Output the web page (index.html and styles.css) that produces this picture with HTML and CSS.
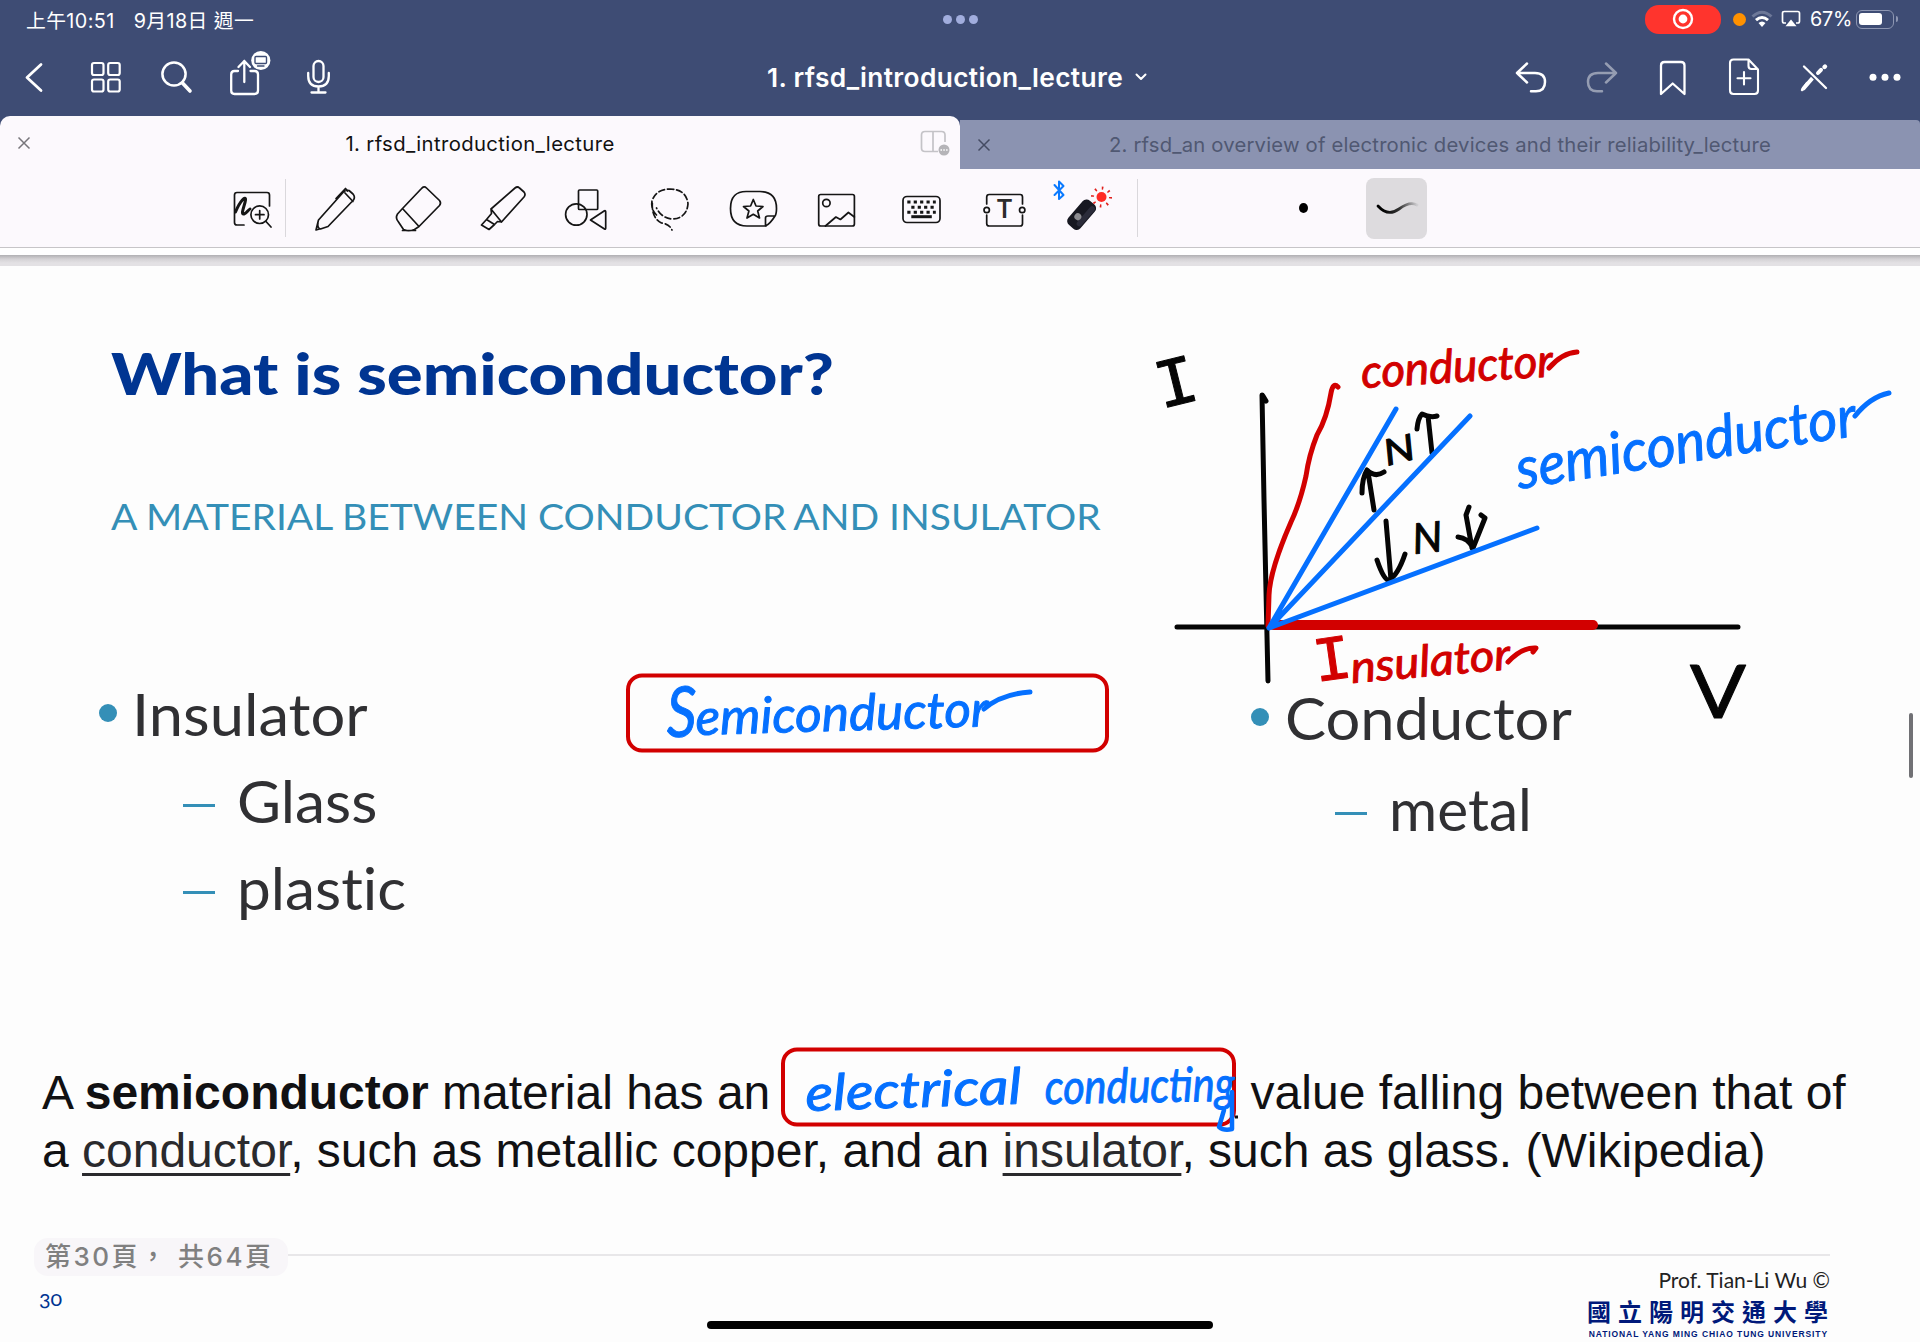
FILE: index.html
```html
<!DOCTYPE html>
<html lang="zh-Hant">
<head>
<meta charset="utf-8">
<title>1. rfsd_introduction_lecture</title>
<link rel="stylesheet" href="styles.css">
</head>
<body>
<header class="top">
  <div class="status">
    <div class="clock"><span>上午10:51</span><span>9月18日 週一</span></div>
    <div class="multitask"><i></i><i></i><i></i></div>
    <div class="indicators">
      <span class="rec"><svg width="24" height="24" viewBox="0 0 24 24"><circle cx="12" cy="12" r="9" fill="none" stroke="#fff" stroke-width="2.4"/><circle cx="12" cy="12" r="4.4" fill="#fff"/></svg></span>
      <i class="mic-dot"></i>
      <svg class="wifi" width="22" height="18" viewBox="0 0 22 18" fill="none" stroke-width="3"><path d="M1.5 6.5Q11 -2 20.500 6.500" stroke="#6d7898"/><path d="M5 10.200Q11 4.800 17 10.200" stroke="#fff"/><path d="M7.500 13Q11 10 14.500 13L11 17Z" fill="#fff"/></svg>
      <svg class="airplay" width="20" height="18" viewBox="0 0 20 18"><path d="M5 13H3.200Q1.500 13 1.500 11.300V3.200Q1.500 1.500 3.200 1.500H16.800Q18.500 1.500 18.500 3.200V11.300Q18.500 13 16.800 13H15" fill="none" stroke="#fff" stroke-width="1.700"/><path d="M10 9.500L15.500 16.200H4.500Z" fill="#fff"/></svg>
      <span class="percent">67%</span>
      <span class="battery"><i></i></span>
    </div>
  </div>
  <nav class="nav">
    <div class="nav-left">
      <svg viewBox="10 54 48 48"><path d="M41 65.500L27 78.500L41 91.500" stroke-width="2.800"/></svg>
      <svg viewBox="81.500 54 48 48"><g stroke-width="2.200"><rect x="92.500" y="64" width="11.500" height="12" rx="2"/><rect x="108.700" y="64" width="11.500" height="12" rx="2"/><rect x="92.500" y="80.500" width="11.500" height="12" rx="2"/><rect x="108.700" y="80.500" width="11.500" height="12" rx="2"/></g></svg>
      <svg viewBox="152 54 48 48"><circle cx="174" cy="75" r="11.600" stroke-width="2.500"/><path d="M182.500 84L190 92" stroke-width="3.600"/></svg>
      <svg viewBox="221 48 54 54" class="share"><path d="M238 72H234.500Q231.200 72 231.200 75.500V91.500Q231.200 95 234.500 95H254.500Q258 95 258 91.500V75.500Q258 72 254.500 72H250.500M244.300 83V62M238.500 68L244.300 62L250 68" stroke-width="2.300"/><circle cx="260.800" cy="61.500" r="9.600" fill="#fff" stroke="none"/><rect x="255" y="57.500" width="11.500" height="7" rx="1" stroke="#3e4c74" stroke-width="1.400"/><path d="M257.500 67H264" stroke="#3e4c74" stroke-width="1.300"/></svg>
      <svg viewBox="294 54 48 48"><rect x="313.500" y="62" width="10" height="21" rx="5" stroke-width="2.300"/><path d="M308.200 74V77Q308.200 87.500 318.500 87.500T328.800 77V74M318.500 87.500V93.500M311.500 93.500H325.500" stroke-width="2.300"/></svg>
    </div>
    <div class="doc-title"><span>1. rfsd_introduction_lecture</span><svg width="14" height="10" viewBox="0 0 14 10"><path d="M2.500 2.500L7 7L11.500 2.500" stroke-width="2"/></svg></div>
    <div class="nav-right">
      <svg viewBox="1509 54 48 48"><path d="M1528 64.500L1518 74L1528 83.500M1518 74H1536Q1546 74 1546 83T1537 92.300H1532" stroke-width="2.500"/></svg>
      <svg viewBox="1579 54 48 48" class="dim"><path d="M1606 64.500L1616 74L1606 83.500M1616 74H1598Q1588 74 1588 83T1597 92.300H1602" stroke-width="2.500"/></svg>
      <svg viewBox="1649 54 48 48"><path d="M1661 95V66.500Q1661 63 1664.500 63H1681Q1684.500 63 1684.500 66.500V95L1672.700 84.500Z" stroke-width="2.300"/></svg>
      <svg viewBox="1720 54 48 48"><path d="M1747.500 60.500H1733.500Q1730 60.500 1730 64V91.500Q1730 95 1733.500 95H1754.500Q1758 95 1758 91.500V70.500L1748.500 60.500V67Q1748.500 70 1751.500 70H1757M1744 73V85.500M1737.500 79.300H1750.500" stroke-width="2.100"/></svg>
      <svg viewBox="1790 54 48 48"><path d="M1803.500 89.500L1813 78.500" stroke-width="4"/><path d="M1802 91L1807 84" stroke-width="2.400"/><path d="M1818 74L1821 70.800" stroke-width="4"/><path d="M1824.500 68L1825 67.500" stroke-width="4.400"/><path d="M1804 67.500L1826 89" stroke="#3e4c74" stroke-width="5"/><path d="M1804 67.500L1826 89" stroke-width="2.300"/></svg>
      <svg viewBox="1861 54 48 48"><g fill="#fff" stroke="none"><circle cx="1873" cy="78.300" r="3.500"/><circle cx="1885" cy="78.300" r="3.500"/><circle cx="1897" cy="78.300" r="3.500"/></g></svg>
    </div>
  </nav>
  <div class="tabs">
    <div class="tab active">
      <svg class="close" width="14" height="14" viewBox="0 0 14 14"><path d="M1.500 1.500L12.500 12.500M12.500 1.500L1.500 12.500"/></svg>
      <span>1. rfsd_introduction_lecture</span>
      <svg class="split" width="32" height="28" viewBox="918 131 32 28"><path d="M937 153.500H924Q920.500 153.500 920.500 150V137Q920.500 133.500 924 133.500H940.500Q944 133.500 944 137V144M932 133.500V153.500" fill="none" stroke="#c4c3c7" stroke-width="1.700"/><circle cx="943" cy="152" r="5.500" fill="#b5b4b8"/><path d="M939.500 152H947" stroke="#fff" stroke-width="1.500" stroke-dasharray="1.500 1.300"/></svg>
    </div>
    <div class="tab">
      <svg class="close" width="14" height="14" viewBox="0 0 14 14"><path d="M1.500 1.500L12.500 12.500M12.500 1.500L1.500 12.500"/></svg>
      <span>2. rfsd_an overview of electronic devices and their reliability_lecture</span>
    </div>
  </div>
</header>
<div class="tools">
  <div class="zoom-tool"><svg width="48" height="56" viewBox="228 182 48 56"><path d="M244 228H237Q234.500 228 234.500 225.500V198Q234.500 195.500 237 195.500H267Q269.500 195.500 269.500 198V209"/><path d="M235.500 215C240 204 246 198 245.500 203C245 208 240 218 244 217C247 216 248 213 250 212" stroke-width="3"/><circle cx="259.700" cy="217.700" r="8.800"/><path d="M266 224.500L271 230M255.500 217.700H264M259.700 213.500V222"/></svg></div>
  <div class="tool-row">
    <svg viewBox="306 182 56 56"><path d="M316 232L318.500 222L343 194.500Q346 191.500 349 192.500L353 196Q355.500 199 353.500 202L328 228.500L320.500 231Q317 230 318 224.500M345 195L353 203.500M336 200.500L345.500 190.500L347.500 193M316 232L319.500 231"/></svg>
    <svg viewBox="390 182 56 56"><path d="M403.500 210.500L422.500 190.500Q425 187.500 427.500 190L440.500 202.500Q442.500 205 440.500 207.500L420 228.500ZM403.500 210.500L398.500 216Q396 220 399.500 224L404.500 231.500Q409 234 415.500 231.500L420 228.500M403.500 232.500H416.500"/></svg>
    <svg viewBox="473 182 56 56"><path d="M491 211L515 190Q517.500 188 519.500 190L524 194Q526 196.500 524 199L501.500 224ZM491 211L491.500 215.500L486.500 221.500L494.500 226.500L497.500 223.500L501.500 224M486.500 221.500L481.500 227L489 231.500L494.500 226.500"/></svg>
    <svg viewBox="557 182 56 56"><rect x="578.500" y="192" width="19.200" height="19.500" rx="1"/><circle cx="576.300" cy="216.500" r="10.700"/><path d="M590.500 222L604.500 212.800Q605.700 212.300 605.700 214V230Q605.700 231.800 604.500 231Z"/></svg>
    <svg viewBox="640.500 182 56 56"><path d="M657 217Q651 211 652.500 203Q656 191.500 670.500 191Q687 191.500 688.500 206Q687 220.500 672.500 221Q662 220 657 210M652.800 205Q652 220 662 225Q670 226 672.500 232" stroke-dasharray="6 3"/></svg>
    <svg viewBox="724 182 56 56"><path d="M766 228H747Q730.500 228 730.500 210.500T747 193.500H760Q776.500 193.500 776.500 210.500Q776.500 216 775 218Q770 226 765.500 228V220Q765.500 218 768 218H775"/><path d="M753.300 201.500L756 208L763 208.500L757.700 213L759.500 220L753.300 216.300L747 220L748.900 213L743.500 208.500L750.600 208Z"/></svg>
    <svg viewBox="807.600 182 56 56"><rect x="819.300" y="196.500" width="35.700" height="31.500" rx="2"/><circle cx="827" cy="205" r="3.700"/><path d="M826 228L836.500 219L841 221.500L849 214.500L855 219"/></svg>
    <svg viewBox="891.200 182 56 56"><rect x="903.200" y="198.500" width="37" height="26" rx="4"/><path d="M907.500 204H936M911.500 209.200H935M907.500 214.200H936" stroke-width="3" stroke-dasharray="3.200 3.200" stroke-linecap="butt"/><path d="M911.500 218.700H932" stroke-width="3" stroke-linecap="butt"/></svg>
    <svg viewBox="974.800 182 56 56"><path d="M986.500 206V199Q986.500 196.500 989 196.500H1020Q1022.300 196.500 1022.300 199V206M986.500 217V225.500Q986.500 228 989 228H1020Q1022.300 228 1022.300 225.500V217"/><circle cx="986.500" cy="212" r="2.700"/><circle cx="1022" cy="212" r="2.700"/><text x="1004.300" y="220.200" class="type-t">T</text></svg>
    <svg viewBox="1051 178 64 60"><path d="M1054.500 187L1063.500 197L1059 201V183.500L1063.500 188L1054.500 197" stroke="#0a7aff" stroke-width="2"/><g transform="rotate(41 1082 217)"><rect x="1073.500" y="201" width="16" height="32" rx="5" fill="#171821" stroke="none"/><rect x="1083" y="203" width="5.500" height="25" rx="3" fill="#2b2c3a" stroke="none"/><circle cx="1080" cy="221" r="3.500" fill="#8b8b90" stroke="none"/></g><circle cx="1101.500" cy="199" r="5" fill="#ff2b25" stroke="none"/><circle cx="1101.500" cy="199" r="9" stroke="#e0201c" stroke-width="3" stroke-dasharray="1.600 5.470" stroke-linecap="butt"/></svg>
  </div>
  <div class="stroke-row">
    <span class="dot-size"></span>
    <span class="stroke-style"><svg width="44" height="24" viewBox="0 0 44 24"><defs><linearGradient id="fade"><stop offset="0.100"/><stop offset="0.550" stop-color="#333"/><stop offset="1" stop-color="#cfced1"/></linearGradient></defs><path d="M3 10Q13 21 24 13T42 9" fill="none" stroke="url(#fade)" stroke-width="2.800" stroke-linecap="round"/></svg></span>
  </div>
</div>
<div class="page-gap"></div>
<main class="slide">
  <h1>What is semiconductor?</h1>
  <h2>A MATERIAL BETWEEN CONDUCTOR<span class="tight"> </span>AND INSULATOR</h2>
  <div class="columns">
    <ul class="list insulators"><li><span>Insulator</span></li><li class="sub"><span>Glass</span></li><li class="sub"><span>plastic</span></li></ul>
    <ul class="list conductors"><li><span>Conductor</span></li><li class="sub"><span>metal</span></li></ul>
  </div>
  <p class="definition"><span class="line">A <b>semiconductor</b> material has an <span class="blank"></span>value falling between that of</span><span class="line">a <u>conductor</u>, such as metallic copper, and an <u>insulator</u>, such as glass. (Wikipedia)</span></p>
  <footer class="foot">
    <div class="rule-row"><span class="pager">第30頁， 共64頁</span><i class="rule"></i></div>
    <div class="credits">
      <span class="num">30</span>
      <div class="school"><span class="prof">Prof. Tian-Li Wu ©</span><span class="cn">國立陽明交通大學</span><span class="en">NATIONAL YANG MING CHIAO TUNG UNIVERSITY</span></div>
    </div>
  </footer>
  <svg class="ink" width="1920" height="1076" viewBox="0 266 1920 1076">
    <g class="black">
      <path d="M1262 395L1264 500L1268 681M1263 396L1266 401M1177 627H1738"/>
      <path d="M1374 510L1368 472M1362 493Q1362 478 1367 470Q1375 478 1384 472M1432 453L1428 416M1417 429Q1418 418 1422 414Q1430 418 1437 416M1386 521L1391 580M1377 560Q1384 581 1389 580Q1398 575 1405 554M1469 507L1466 515L1472 548M1458 537Q1468 538 1473 548L1485 518L1481 515"/>
    </g>
    <g class="red">
      <path d="M1338 387Q1333 382 1331 393Q1327 418 1317 435Q1309 455 1306 476Q1300 503 1291 522Q1270 570 1269 595L1268 626" stroke-width="5"/>
      <path d="M1274 625H1593" stroke-width="10"/>
      <rect x="628" y="675.500" width="479" height="75" rx="14" stroke-width="4"/>
      <rect x="783" y="1049.500" width="451" height="75" rx="14" stroke-width="4"/>
      <path d="M1549 368Q1562 353 1577 352M1508 662Q1522 647 1536 648L1533 652" stroke-width="5"/>
    </g>
    <g class="blue"><path d="M1269 628L1396 409M1269 628L1470 416M1269 628L1537 528M1855 416Q1870 397 1889 393M984 709Q1001 694 1030 692"/></g>
    <path d="M1235 1117H1238" stroke="#111" stroke-width="3"/>
    <g class="hand">
      <text class="k serif" font-size="70" transform="translate(1161 409) rotate(-14)">I</text>
      <text class="k" font-size="74" x="1690" y="718" textLength="56" lengthAdjust="spacingAndGlyphs">V</text>
      <text class="k slant" font-size="36" transform="translate(1387 466) rotate(-14)" textLength="31" lengthAdjust="spacingAndGlyphs">N</text>
      <text class="k slant" font-size="42" transform="translate(1414 554) rotate(-6)">N</text>
      <text class="r slant" font-size="46" transform="translate(1362 388) rotate(-3.500)" textLength="192" lengthAdjust="spacingAndGlyphs">conductor</text>
      <text class="r serif" font-size="64" transform="translate(1316 682) rotate(-8)">I</text>
      <text class="r slant" font-size="44" transform="translate(1352 683) rotate(-5)" textLength="160" lengthAdjust="spacingAndGlyphs">nsulator</text>
      <text class="b slant" font-size="58" transform="translate(1519 489) rotate(-9)" textLength="344" lengthAdjust="spacingAndGlyphs">semiconductor</text>
      <text class="b slant" font-size="70" transform="translate(667 737) rotate(-1)" textLength="30" lengthAdjust="spacingAndGlyphs">S</text>
      <text class="b slant" font-size="50" transform="translate(696 735) rotate(-1.700)" textLength="293" lengthAdjust="spacingAndGlyphs">emiconductor</text>
      <text class="b slant" font-size="50" transform="translate(806 1111) rotate(-2)" textLength="216" lengthAdjust="spacingAndGlyphs">electrical</text>
      <text class="b slant" font-size="48" transform="translate(1045 1104) rotate(-1)" textLength="190" lengthAdjust="spacingAndGlyphs">conducting</text>
      <path d="M1232 1092V1129Q1224 1131 1219 1127L1224 1110" class="tail"/>
    </g>
  </svg>
  <i class="scrollbar"></i>
  <i class="home"></i>
</main>
</body>
</html>
```
FILE: styles.css
```css
* { box-sizing: border-box; }
body { margin: 0; width: 1920px; height: 1342px; overflow: hidden; background: #fdfdfd; font-family: Inter, "Noto Sans CJK TC", sans-serif; }
i { font-style: normal; display: block; }
svg { display: block; flex: none; }

.top { background: #3e4c74; color: #fff; height: 169px; display: flex; flex-direction: column; }
.status { height: 38px; display: grid; grid-template-columns: 1fr auto 1fr; align-items: center; padding: 0 26px; font-size: 19.800px; }
.clock { display: flex; gap: 19px; white-space: pre; letter-spacing: .4px; }
.multitask { display: flex; gap: 4px; }
.multitask i { width: 9px; height: 9px; border-radius: 50%; background: #a1addd; }
.indicators { display: flex; align-items: center; justify-content: flex-end; }
.rec { width: 76px; height: 29px; border-radius: 14px; background: #ff342d; display: flex; align-items: center; justify-content: center; }
.mic-dot { width: 13px; height: 13px; border-radius: 50%; background: #ff9100; margin: 0 5px 0 12px; }
.airplay { margin: 0 9px 0 8px; }
.percent { width: 43px; letter-spacing: -0.200px; }
.battery { position: relative; width: 38px; height: 19px; border: 1.5px solid #8d96b2; border-radius: 6px; padding: 2px; margin-left: 3px; }
.battery::after { content: ""; position: absolute; right: -5px; top: 5px; width: 2px; height: 6px; border-radius: 0 2px 2px 0; background: #8d96b2; }
.battery i { width: 23px; height: 12px; border-radius: 3px; background: #fff; }

.nav { height: 78px; display: grid; grid-template-columns: 700px 1fr 700px; align-items: center; }
.nav svg { fill: none; stroke: #fff; stroke-linecap: round; stroke-linejoin: round; }
.nav-left, .nav-right { display: flex; align-items: center; }
.nav-left svg, .nav-right svg { width: 48px; height: 48px; }
.nav-left { padding-left: 10px; gap: 23px; }
.nav-left .share { width: 54px; height: 54px; margin: -6px -4px 0 -2px; }
.nav-right { justify-content: flex-end; padding-right: 11px; gap: 22.600px; }
.dim { opacity: .45; }
.doc-title { display: flex; align-items: center; justify-content: center; gap: 11px; font-size: 26.300px; letter-spacing: .35px; font-weight: 600; padding-right: 5px; white-space: nowrap; }

.tabs { height: 53px; display: flex; align-items: flex-end; }
.tab { width: 960px; height: 49px; background: #8b93b1; color: #505872; display: grid; grid-template-columns: 24px 1fr 32px; align-items: center; padding: 0 9px 0 17px; font-size: 20.300px; letter-spacing: .18px; text-align: center; white-space: nowrap; border-top-right-radius: 4px; }
.tab.active { height: 53px; padding-top: 1px; background: #fcf9fd; color: #111; border-radius: 10px 10px 0 0; letter-spacing: .38px; }
.close { fill: none; stroke: #444b63; stroke-width: 1.500; }
.active .close { stroke: #77767b; }

.tools { height: 78px; background: #fcf9fd; display: flex; align-items: center; }
.tools svg { fill: none; stroke: #151515; stroke-width: 1.700; stroke-linecap: round; stroke-linejoin: round; }
.zoom-tool { width: 286px; height: 58px; padding-left: 228px; border-right: 1px solid #dad8dc; }
.tool-row { width: 852px; height: 58px; padding-left: 6px; border-right: 1px solid #dad8dc; display: flex; align-items: center; }
.tool-row svg { width: 56px; height: 56px; margin: 0 13.800px; }
.tool-row svg:last-child { width: 64px; height: 60px; margin: -4px 0 0 7px; }
.type-t { font: 600 25px Inter, sans-serif; text-anchor: middle; fill: #2c2c2c; stroke: none; }
.stroke-row { display: flex; align-items: center; padding-left: 161px; gap: 58px; }
.dot-size { width: 9px; height: 10px; border-radius: 50%; background: #000; }
.stroke-style { width: 61px; height: 61px; border-radius: 8px; background: #dddbde; display: flex; align-items: center; justify-content: center; }
.stroke-style svg { stroke: none; }
.page-gap { height: 19px; border-top: 1px solid #c7c5c8; background: linear-gradient(#fff 0 7px, #b5b4b7 7.500px, #d4d2d5 11px, #e3e1e4 15px); }

.slide { position: relative; height: 1076px; padding-top: 72px; background: #fdfdfd; font-family: Lato, sans-serif; color: #303033; }
h1, h2, .list span { transform-origin: left center; }
h1 { margin: 0 0 0 111px; font-size: 58px; line-height: 70px; font-weight: 900; color: #003592; white-space: nowrap; width: 640px; transform: scaleX(1.155); }
h2 { margin: 85px 0 0 111px; font-size: 37.500px; line-height: 46px; font-weight: 400; color: #348fb7; white-space: nowrap; width: 960px; transform: scaleX(1.040); }
.tight { letter-spacing: -3px; }
.columns { display: flex; margin-top: 131px; height: 260px; }
.list { margin: 0; padding: 0; list-style: none; font-size: 58px; font-variant-ligatures: none; }
.list span { transform: scaleX(1.060); }
.list .sub span { transform: scaleX(1.040); }
.list li { display: flex; align-items: center; gap: 15px; line-height: 87px; white-space: nowrap; }
.list li::before { content: ""; width: 18px; height: 18px; border-radius: 50%; background: #348fb7; flex: none; margin-top: -2px; }
.list .sub { padding-left: 84px; gap: 22px; }
.list .sub::before { width: 32px; height: 3px; border-radius: 0; margin-top: 10px; }
.insulators { width: 1152px; padding-left: 99px; }
.conductors { padding-top: 2px; padding-left: 99px; }
.conductors li { line-height: 91px; gap: 16px; }
.conductors .sub span { transform: scaleX(1.010); }
.definition { margin: 134px 0 0 42px; font-family: "Liberation Sans", Arial, sans-serif; font-size: 48px; line-height: 58px; color: #111113; }
.line { display: block; white-space: nowrap; }
.blank { display: inline-block; width: 467px; }
.definition u { text-decoration-thickness: 3px; text-underline-offset: 6px; color: #2a2a2d; }

.foot { margin-top: 58px; padding: 0 90px 0 34px; }
.rule-row { display: flex; align-items: center; height: 38px; }
.pager { width: 254px; height: 38px; border-radius: 14px; background: #f8f6f9; color: #808080; padding-left: 11px; font: 500 26px/37px Inter, "Noto Sans CJK TC", sans-serif; letter-spacing: 2.500px; white-space: nowrap; }
.rule { flex: 1; height: 2px; background: #e8e7e9; margin-top: -4px; }
.credits { display: flex; justify-content: space-between; }
.num { padding: 9px 0 0 5px; font-size: 21.500px; line-height: 26px; color: #003592; font-variant-numeric: oldstyle-nums; }
.school { display: flex; flex-direction: column; align-items: flex-end; white-space: nowrap; color: #00197a; }
.prof { margin-top: -9px; font-size: 21px; line-height: 26px; color: #222; }
.cn { font: 700 24px/30px "Noto Sans CJK TC", sans-serif; letter-spacing: 7px; margin: 3px -5px 0 0; }
.en { font: 700 8.500px/12px "Liberation Sans", Arial, sans-serif; margin: 2px 2px 0 0; letter-spacing: .9px; }

.ink, .scrollbar, .home { position: absolute; }
.ink { left: 0; top: 0; }
.ink g { fill: none; stroke-linecap: round; stroke-linejoin: round; stroke-width: 5; }
.ink .black { stroke: #050505; }
.ink .red { stroke: #d20000; }
.ink .blue { stroke: #0570ff; }
.ink .hand { font-family: Lato, sans-serif; stroke-width: 1; }
.hand .slant { font-style: italic; }
.hand .serif { font-family: "Liberation Mono", monospace; }
.hand .k { fill: #050505; stroke: #050505; }
.hand .r { fill: #d20000; stroke: #d20000; }
.hand .b { fill: #0570ff; stroke: #0570ff; }
.hand .tail { fill: none; stroke: #0570ff; stroke-width: 4.500; }
.scrollbar { left: 1909px; top: 447px; width: 4px; height: 65px; border-radius: 2px; background: #707074; }
.home { left: 707px; top: 1055px; width: 506px; height: 8px; border-radius: 4px; background: #000; }
```
